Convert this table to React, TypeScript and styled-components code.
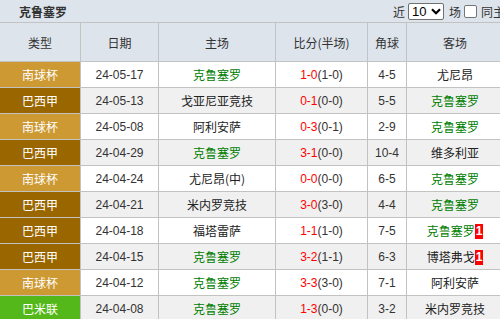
import React from "react";
import styled, { createGlobalStyle } from "styled-components";

const GlobalStyle = createGlobalStyle`
  html, body {
    margin: 0;
    padding: 0;
    overflow: hidden;
    background: #ffffff;
  }
  body {
    font-family: "Liberation Sans", "Noto Sans CJK SC", sans-serif;
    font-size: 12px;
    color: #333333;
  }
`;

const Page = styled.div`
  width: 524px;
`;

const TitleBar = styled.div`
  display: flex;
  align-items: center;
  height: 22px;
  padding: 0 7px 0 19px;
  background: #dde4ec;
  box-sizing: border-box;
`;

const Title = styled.div`
  font-weight: bold;
  font-size: 12px;
  color: #333;
  font-family: "Noto Sans CJK SC", sans-serif;
`;

const Controls = styled.div`
  margin-left: auto;
  display: flex;
  align-items: center;
  gap: 3px;
  font-family: "Noto Sans CJK SC", sans-serif;
  font-size: 12px;
  color: #333;
  white-space: nowrap;
`;

const FakeSelect = styled.span`
  display: inline-flex;
  align-items: center;
  justify-content: space-between;
  width: 36px;
  height: 17px;
  box-sizing: border-box;
  border: 1px solid #707070;
  border-radius: 2px;
  background: #fff;
  padding: 0 2px 0 3px;
  margin-right: 2px;
  font-family: "Liberation Sans", sans-serif;
  font-size: 13px;
  color: #000;
`;

const Check = styled.span`
  display: inline-block;
  width: 13px;
  height: 13px;
  box-sizing: border-box;
  border: 1px solid #767676;
  border-radius: 2px;
  background: #fff;
  margin: 0 1px 0 0;
`;

const Table = styled.table`
  width: 504px;
  table-layout: fixed;
  border-collapse: separate;
  border-spacing: 0;
`;

const Th = styled.th<{ $w: number }>`
  width: ${(p) => p.$w}px;
  height: 40px;
  box-sizing: border-box;
  padding: 0;
  background: #dde4ec;
  border-top: 1px solid #c2c2c2;
  border-bottom: 1px solid #c2c2c2;
  border-right: 1px solid #c2c2c2;
  font-weight: normal;
  font-family: "Noto Sans CJK SC", sans-serif;
  font-size: 12px;
  color: #333;
  text-align: center;
  vertical-align: middle;
`;

const Tr = styled.tr<{ $alt: boolean }>`
  background: ${(p) => (p.$alt ? "#f0f0f0" : "#ffffff")};
`;

const Td = styled.td`
  height: 26px;
  box-sizing: border-box;
  padding: 0;
  border-bottom: 1px solid #c2c2c2;
  border-right: 1px solid #c2c2c2;
  text-align: center;
  vertical-align: middle;
  white-space: nowrap;
  font-size: 12px;
  color: #333;
`;

const typeColors: Record<string, string> = {
  南球杯: "#cc9933",
  巴西甲: "#996600",
  巴米联: "#55b81a",
};

const TypeTd = styled(Td)<{ $bg: string }>`
  background: ${(p) => p.$bg};
  color: #ffffff;
  font-family: "Noto Sans CJK SC", sans-serif;
`;

const Team = styled.span<{ $home: boolean }>`
  color: ${(p) => (p.$home ? "#008000" : "#222")};
  font-family: "Noto Sans CJK SC", sans-serif;
`;

const Score = styled.span`
  color: #ff0000;
`;

const Half = styled.span`
  color: #333;
`;

const Badge = styled.span`
  display: inline-block;
  background: #ff0000;
  color: #ffffff;
  font-weight: bold;
  font-size: 12px;
  line-height: 15px;
  padding: 0 1px;
  vertical-align: 1px;
`;

type Row = {
  type: string;
  date: string;
  home: string;
  score: string;
  half: string;
  corner: string;
  away: string;
  badge?: boolean;
};

const rows: Row[] = [
  { type: "南球杯", date: "24-05-17", home: "克鲁塞罗", score: "1-0", half: "(1-0)", corner: "4-5", away: "尤尼昂" },
  { type: "巴西甲", date: "24-05-13", home: "戈亚尼亚竞技", score: "0-1", half: "(0-0)", corner: "5-5", away: "克鲁塞罗" },
  { type: "南球杯", date: "24-05-08", home: "阿利安萨", score: "0-3", half: "(0-1)", corner: "2-9", away: "克鲁塞罗" },
  { type: "巴西甲", date: "24-04-29", home: "克鲁塞罗", score: "3-1", half: "(0-0)", corner: "10-4", away: "维多利亚" },
  { type: "南球杯", date: "24-04-24", home: "尤尼昂(中)", score: "0-0", half: "(0-0)", corner: "6-5", away: "克鲁塞罗" },
  { type: "巴西甲", date: "24-04-21", home: "米内罗竞技", score: "3-0", half: "(3-0)", corner: "4-4", away: "克鲁塞罗" },
  { type: "巴西甲", date: "24-04-18", home: "福塔雷萨", score: "1-1", half: "(1-0)", corner: "7-5", away: "克鲁塞罗", badge: true },
  { type: "巴西甲", date: "24-04-15", home: "克鲁塞罗", score: "3-2", half: "(1-1)", corner: "6-3", away: "博塔弗戈", badge: true },
  { type: "南球杯", date: "24-04-12", home: "克鲁塞罗", score: "3-3", half: "(3-0)", corner: "7-1", away: "阿利安萨" },
  { type: "巴米联", date: "24-04-08", home: "克鲁塞罗", score: "1-3", half: "(0-0)", corner: "3-2", away: "米内罗竞技" },
];

const TEAM = "克鲁塞罗";

const Chevron = () => (
  <svg width="10" height="7" viewBox="0 0 10 7">
    <path d="M1 1.2 L5 5.2 L9 1.2" fill="none" stroke="#000" strokeWidth="2.2" />
  </svg>
);

export default function App() {
  return (
    <Page>
      <GlobalStyle />
      <TitleBar>
        <Title>克鲁塞罗</Title>
        <Controls>
          <span>近</span>
          <FakeSelect>
            <span>10</span>
            <Chevron />
          </FakeSelect>
          <span>场</span>
          <Check />
          <span>同主场</span>
        </Controls>
      </TitleBar>
      <Table>
        <thead>
          <tr>
            <Th $w={81}>类型</Th>
            <Th $w={78}>日期</Th>
            <Th $w={117}>主场</Th>
            <Th $w={92}>比分(半场)</Th>
            <Th $w={39}>角球</Th>
            <Th $w={97}>客场</Th>
          </tr>
        </thead>
        <tbody>
          {rows.map((r, i) => (
            <Tr key={i} $alt={i % 2 === 1}>
              <TypeTd $bg={typeColors[r.type]}>{r.type}</TypeTd>
              <Td>{r.date}</Td>
              <Td>
                <Team $home={r.home === TEAM}>{r.home}</Team>
              </Td>
              <Td>
                <Score>{r.score}</Score>
                <Half>{r.half}</Half>
              </Td>
              <Td>{r.corner}</Td>
              <Td>
                <Team $home={r.away === TEAM}>{r.away}</Team>
                {r.badge && <Badge>1</Badge>}
              </Td>
            </Tr>
          ))}
        </tbody>
      </Table>
    </Page>
  );
}
